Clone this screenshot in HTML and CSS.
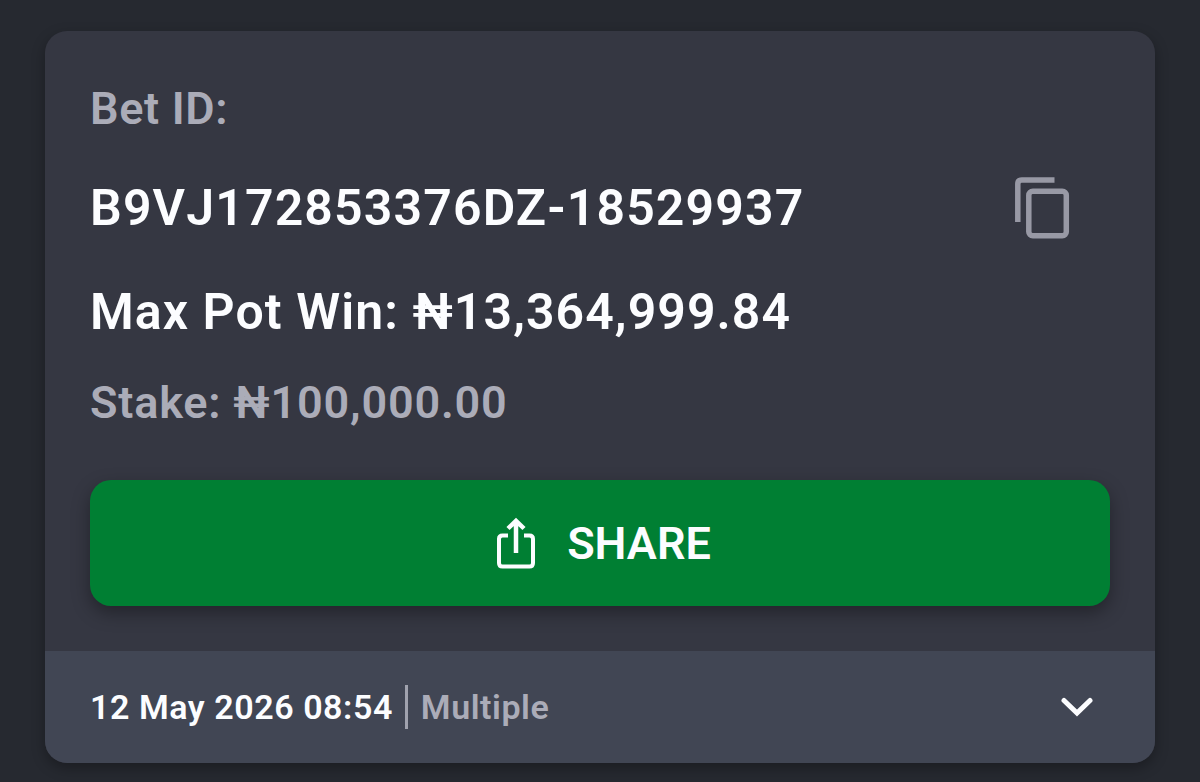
FILE: index.html
```html
<!DOCTYPE html>
<html lang="en">
<head>
<meta charset="utf-8">
<title>Bet details</title>
<link rel="stylesheet" href="styles.css">
</head>
<body>
<main class="card">
  <section class="details">
    <div class="label">Bet ID:</div>
    <div class="id-row">
      <span class="bet-id">B9VJ172853376DZ-18529937</span>
      <svg class="copy" viewBox="0 0 56 64" width="56" height="64"><path d="M3.800 46V8q0-4 4-4H40.500" fill="none" stroke="currentColor" stroke-width="5.500"/><rect x="14.800" y="15.300" width="37.500" height="44.500" rx="4" fill="none" stroke="currentColor" stroke-width="5.500"/></svg>
    </div>
    <div class="win">Max Pot Win: ₦13,364,999.84</div>
    <div class="stake">Stake: ₦100,000.00</div>
    <button class="share">
      <svg viewBox="0 0 40 52" width="40" height="52" fill="none" stroke="currentColor" stroke-width="4"><path d="M12 18.500H6.500q-3.500 0-3.500 3.500V46q0 3.500 3.500 3.500H33.500q3.500 0 3.500-3.500V22q0-3.500-3.500-3.500H28"/><path d="M20 36V5M12 11.500L20 3.800L28 11.500" stroke-width="4.500"/></svg>
      <span class="share-text">SHARE</span>
    </button>
  </section>
  <footer class="footer">
    <span class="date">12 May 2026 08:54</span>
    <span class="divider"></span>
    <span class="kind">Multiple</span>
    <svg class="chevron" viewBox="0 0 32 20" width="32" height="20"><path d="M3 3.500L16 16L29 3.500" fill="none" stroke="currentColor" stroke-width="5" stroke-linecap="round"/></svg>
  </footer>
</main>
</body>
</html>
```
FILE: styles.css
```css
* { box-sizing: border-box; }
body { margin: 0; padding: 31px 45px 0; height: 782px; overflow: hidden; background: #262930; font-family: Roboto, sans-serif; font-weight: 600; }
.card { width: 1110px; height: 732px; border-radius: 22px; overflow: hidden; background: #353742; color: #fcfdff; box-shadow: 0 5px 14px rgba(0,0,0,.3); }
.details { height: 620px; padding: 48px 45px 0; white-space: nowrap; }
.label { height: 60px; line-height: 60px; font-size: 45px; letter-spacing: .65px; color: #abacb8; }
.id-row { display: flex; justify-content: space-between; align-items: center; height: 64px; margin-top: 37px; padding-right: 40px; }
.bet-id { font-size: 50px; letter-spacing: 1.15px; }
.copy { color: #9899a5; }
.win { height: 64px; line-height: 64px; margin-top: 40px; font-size: 50px; letter-spacing: 1.07px; }
.stake { height: 60px; line-height: 60px; margin-top: 29px; font-size: 45px; letter-spacing: .8px; color: #abacb8; }
.share { display: flex; align-items: center; justify-content: center; gap: 31px; width: 1020px; height: 126px; margin-top: 47px; padding: 0 0 0 7px; border: 0; border-radius: 21px; background: #007f33; color: #fcfdff; font: 600 45px Roboto, sans-serif; letter-spacing: 0; box-shadow: 0 7px 18px rgba(0,0,0,.35); }
.footer { display: flex; align-items: center; height: 112px; padding: 0 62px 0 45px; background: #414654; font-size: 34px; letter-spacing: .55px; white-space: nowrap; }
.divider { width: 3px; height: 44px; margin: 0 13px 0 12px; background: #a0a2ae; }
.kind { color: #abacb8; }
.chevron { margin-left: auto; }
```
